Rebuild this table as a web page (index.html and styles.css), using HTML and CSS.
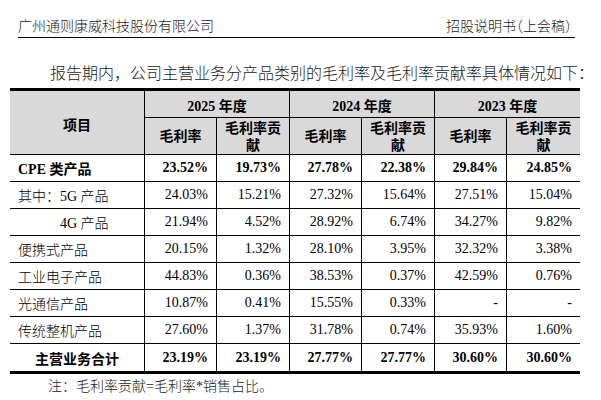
FILE: index.html
```html
<!DOCTYPE html>
<html lang="zh-CN">
<head>
<meta charset="utf-8">
<title>毛利率及毛利率贡献</title>
<link rel="stylesheet" href="styles.css">
</head>
<body>
<div class="page">
  <header class="doc-head">
    <span class="company">广州通则康威科技股份有限公司</span>
    <span class="doc">招股说明书<span class="halt">（</span>上会稿<span class="halt">）</span></span>
  </header>
  <p class="intro">报告期内，公司主营业务分产品类别的毛利率及毛利率贡献率具体情况如下：</p>
  <div class="tbl">
    <div class="thead">
      <div class="th item">项目</div>
      <div class="th year">2025 年度</div>
      <div class="th year">2024 年度</div>
      <div class="th year end">2023 年度</div>
      <div class="th sub">毛利率</div>
      <div class="th sub">毛利率贡献</div>
      <div class="th sub">毛利率</div>
      <div class="th sub">毛利率贡献</div>
      <div class="th sub">毛利率</div>
      <div class="th sub end">毛利率贡献</div>
    </div>
    <div class="row bold">
      <div class="lbl">CPE 类产品</div>
      <div class="num">23.52%</div><div class="num">19.73%</div>
      <div class="num">27.78%</div><div class="num">22.38%</div>
      <div class="num">29.84%</div><div class="num">24.85%</div>
    </div>
    <div class="row">
      <div class="lbl">其中：5G 产品</div>
      <div class="num">24.03%</div><div class="num">15.21%</div>
      <div class="num">27.32%</div><div class="num">15.64%</div>
      <div class="num">27.51%</div><div class="num">15.04%</div>
    </div>
    <div class="row">
      <div class="lbl indent">4G 产品</div>
      <div class="num">21.94%</div><div class="num">4.52%</div>
      <div class="num">28.92%</div><div class="num">6.74%</div>
      <div class="num">34.27%</div><div class="num">9.82%</div>
    </div>
    <div class="row">
      <div class="lbl">便携式产品</div>
      <div class="num">20.15%</div><div class="num">1.32%</div>
      <div class="num">28.10%</div><div class="num">3.95%</div>
      <div class="num">32.32%</div><div class="num">3.38%</div>
    </div>
    <div class="row">
      <div class="lbl">工业电子产品</div>
      <div class="num">44.83%</div><div class="num">0.36%</div>
      <div class="num">38.53%</div><div class="num">0.37%</div>
      <div class="num">42.59%</div><div class="num">0.76%</div>
    </div>
    <div class="row">
      <div class="lbl">光通信产品</div>
      <div class="num">10.87%</div><div class="num">0.41%</div>
      <div class="num">15.55%</div><div class="num">0.33%</div>
      <div class="num">-</div><div class="num">-</div>
    </div>
    <div class="row">
      <div class="lbl">传统整机产品</div>
      <div class="num">27.60%</div><div class="num">1.37%</div>
      <div class="num">31.78%</div><div class="num">0.74%</div>
      <div class="num">35.93%</div><div class="num">1.60%</div>
    </div>
    <div class="row bold total">
      <div class="lbl center">主营业务合计</div>
      <div class="num">23.19%</div><div class="num">23.19%</div>
      <div class="num">27.77%</div><div class="num">27.77%</div>
      <div class="num">30.60%</div><div class="num">30.60%</div>
    </div>
  </div>
  <p class="note">注：毛利率贡献=毛利率*销售占比。</p>
</div>
</body>
</html>
```
FILE: styles.css
```css
* { box-sizing: border-box; }

html, body {
  margin: 0;
  padding: 0;
  background: #fff;
}

body {
  color: #000;
  font-family: "Liberation Serif", "Noto Sans CJK SC", serif;
  font-weight: 300;
}

.page {
  width: 601px;
  height: 400px;
  overflow: hidden;
}

.doc-head {
  margin: 16px 0 0 18px;
  width: 557px;
  height: 22px;
  padding-right: 3px;
  border-bottom: 1px solid #000;
  display: flex;
  justify-content: space-between;
  align-items: center;
  font-size: 14px;
  line-height: 21px;
  color: #222;
}

.halt { font-feature-settings: "halt"; }

.intro {
  margin: 24px 0 0 0;
  padding-left: 50px;
  font-size: 16px;
  line-height: 24px;
  height: 24px;
  white-space: nowrap;
  color: #1a1a1a;
}

.tbl {
  margin: 2px 0 0 10px;
  width: 570px;
  border-top: 3px solid #000;
  border-bottom: 3px solid #000;
  font-size: 14px;
}

.thead,
.row {
  display: grid;
  grid-template-columns: 135px 72px 73px 72px 73px 72px 73px;
}

.thead {
  grid-template-rows: 27px 36px;
  background: #d9d9d9;
  border-bottom: 1px solid #000;
  font-weight: 700;
}

.th {
  display: flex;
  align-items: center;
  justify-content: center;
  text-align: center;
  border-right: 1px solid #000;
}

.th.end { border-right: none; }

.item {
  grid-row: 1 / span 2;
  padding-top: 2px;
}

.year {
  grid-column: span 2;
  border-bottom: 1px solid #000;
  padding-top: 1px;
}

.sub {
  padding: 1px 4px 0;
  line-height: 17px;
}

.row {
  height: 27px;
  border-bottom: 1px solid #000;
}

.row.total { border-bottom: none; }

.row > div {
  display: flex;
  align-items: center;
  border-right: 1px solid #000;
  white-space: nowrap;
}

.row > div:last-child { border-right: none; }

.lbl { padding-left: 8px; }
.lbl.indent { padding-left: 50px; }
.lbl.center { justify-content: center; padding-left: 0; }

.num {
  justify-content: flex-end;
  padding-right: 8px;
}

.bold { font-weight: 700; }

.note {
  margin: 3px 0 0 48px;
  font-size: 14px;
  line-height: 20px;
  color: #222;
}
```
